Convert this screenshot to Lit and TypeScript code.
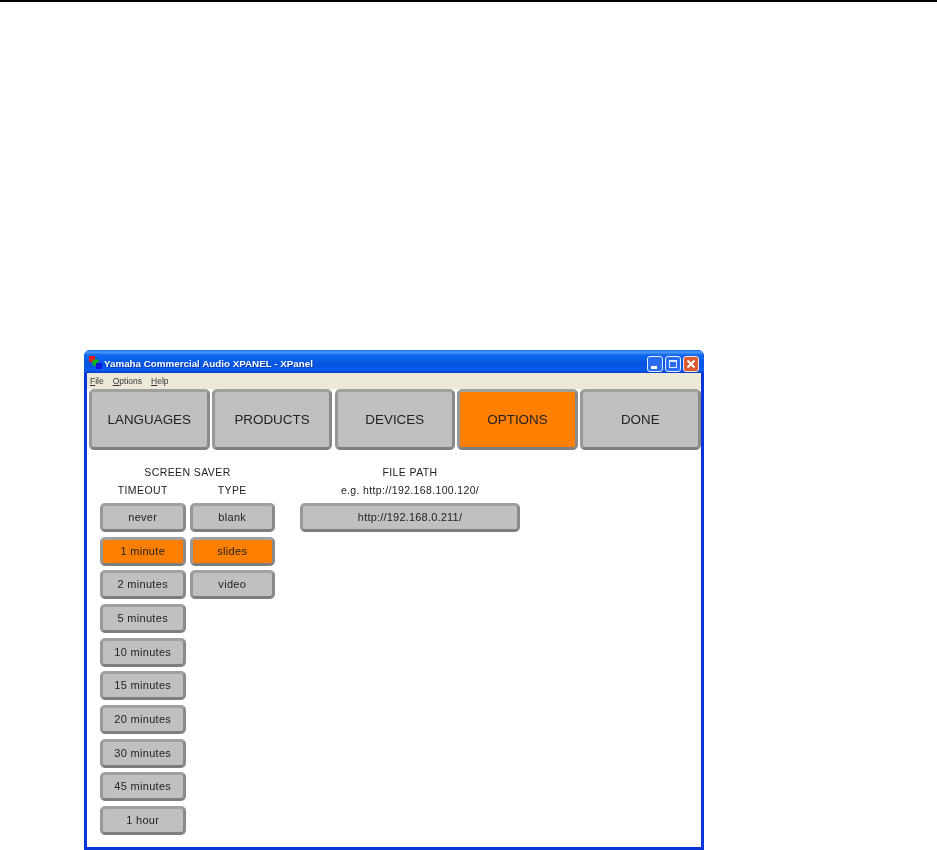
import { LitElement, html, css } from "lit";
import { customElement } from "lit/decorators.js";

const TABS = ["LANGUAGES", "PRODUCTS", "DEVICES", "OPTIONS", "DONE"];
const TIMEOUTS = ["never", "1 minute", "2 minutes", "5 minutes", "10 minutes", "15 minutes", "20 minutes", "30 minutes", "45 minutes", "1 hour"];
const TYPES = ["blank", "slides", "video"];

@customElement("app-root")
export class AppRoot extends LitElement {
  static styles = css`
    :host { display: block; width: 937px; height: 850px; overflow: hidden; background: #fff; font-family: "Liberation Sans", Arial, sans-serif; color: #222; }
    .rule { height: 2px; background: #000; }
    .page { padding: 348px 0 0 84px; }
    .window { width: 620px; height: 500px; box-sizing: border-box; display: flex; flex-direction: column; background: #0836d6; border-radius: 6px 6px 0 0; padding: 0 3px 3px; }
    .title { height: 23px; box-sizing: border-box; flex: none; margin: 0 -3px; padding: 4px 5px 0 5px; display: flex; align-items: center; gap: 2px; border-radius: 6px 6px 0 0;
      background: linear-gradient(#1a66ec 0, #4a9cfa 2px, #1268ee 5px, #0554e2 14px, #0a5cee 20px, #0240c8 23px); }
    .logo { flex: none; margin-top: -2px; }
    .caption { flex: 1; color: #fff; font: bold 9.8px "Liberation Sans", Arial, sans-serif; text-shadow: 1px 1px 0 #0a3aa8; white-space: nowrap; filter: blur(.2px); }
    .ctrls { display: flex; gap: 2px; }
    .ctrl { display: block; }
    .menu { height: 16px; box-sizing: border-box; padding: 0 0 1px 3px; flex: none; background: #ece9d8; display: flex; align-items: center; gap: 9px; font: 8.5px "Liberation Sans", Arial, sans-serif; color: #333; filter: blur(.25px); }
    .menu u { text-decoration-thickness: 1px; }
    .body { flex: 1; background: #fff; min-height: 0; }
    .tabs { display: flex; gap: 2.25px; padding: 0 0 0 2px; height: 61px; }
    .btn { box-sizing: border-box; display: flex; align-items: center; justify-content: center; background: #c0c0c0; border: 3px solid; border-color: #a0a0a0 #8a8a8a #7e7e7e #989898; border-radius: 5px; white-space: nowrap; filter: blur(.4px); }
    .btn.on { background: #ff8000; }
    .tab { width: 120.5px; font-size: 13.4px; }
    .content { display: flex; padding: 13px 0 0 13px; }
    .saver { width: 175px; margin-right: 25px; }
    .head { height: 18px; display: flex; align-items: center; justify-content: center; font-size: 10.5px; letter-spacing: .4px; white-space: nowrap; filter: blur(.25px); }
    .cols { display: flex; gap: 4px; }
    .col { width: 85.5px; display: flex; flex-direction: column; }
    .list { display: flex; flex-direction: column; gap: 4.67px; margin-top: 4px; }
    .sm { height: 29px; font-size: 11px; letter-spacing: .3px; padding-bottom: 1px; }
    .file { width: 220px; }
    .hint { letter-spacing: .35px; }
    .path { letter-spacing: .2px; }
  `;

  render() {
    return html`
      <div class="rule"></div>
      <div class="page">
        <div class="window">
          <div class="title">
            <svg class="logo" width="13" height="13" viewBox="0 0 13 13">
              <rect x="0" y="0" width="6" height="6" fill="#e81818"/>
              <rect x="3.5" y="3.5" width="6" height="6" fill="#14b414"/>
              <rect x="7" y="7" width="6" height="6" fill="#1414e0"/>
            </svg>
            <span class="caption">Yamaha Commercial Audio XPANEL - XPanel</span>
            <div class="ctrls">
              <svg class="ctrl" width="16" height="16" viewBox="0 0 16 16">
                <rect x=".5" y=".5" width="15" height="15" rx="2.5" fill="#2a6cf0" stroke="#e8eefc"/>
                <rect x="4" y="10" width="6" height="3" fill="#fff"/>
              </svg>
              <svg class="ctrl" width="16" height="16" viewBox="0 0 16 16">
                <rect x=".5" y=".5" width="15" height="15" rx="2.5" fill="#2a6cf0" stroke="#e8eefc"/>
                <rect x="4.5" y="4.5" width="7" height="7" fill="none" stroke="#dfe8fc"/>
                <rect x="4" y="4" width="8" height="2" fill="#dfe8fc"/>
              </svg>
              <svg class="ctrl" width="16" height="16" viewBox="0 0 16 16">
                <rect x=".5" y=".5" width="15" height="15" rx="2.5" fill="#dc5a32" stroke="#f2e4de"/>
                <path d="M4.5 4.5 L11.5 11.5 M11.5 4.5 L4.5 11.5" stroke="#fff" stroke-width="2"/>
              </svg>
            </div>
          </div>
          <div class="menu">
            <span><u>F</u>ile</span><span><u>O</u>ptions</span><span><u>H</u>elp</span>
          </div>
          <div class="body">
            <div class="tabs">
              ${TABS.map((t) => html`<div class="btn tab ${t === "OPTIONS" ? "on" : ""}">${t}</div>`)}
            </div>
            <div class="content">
              <div class="saver">
                <div class="head">SCREEN SAVER</div>
                <div class="cols">
                  <div class="col">
                    <div class="head">TIMEOUT</div>
                    <div class="list">
                      ${TIMEOUTS.map((t) => html`<div class="btn sm ${t === "1 minute" ? "on" : ""}">${t}</div>`)}
                    </div>
                  </div>
                  <div class="col">
                    <div class="head">TYPE</div>
                    <div class="list">
                      ${TYPES.map((t) => html`<div class="btn sm ${t === "slides" ? "on" : ""}">${t}</div>`)}
                    </div>
                  </div>
                </div>
              </div>
              <div class="file">
                <div class="head">FILE PATH</div>
                <div class="head hint">e.g. http://192.168.100.120/</div>
                <div class="list"><div class="btn sm path">http://192.168.0.211/</div></div>
              </div>
            </div>
          </div>
        </div>
      </div>
    `;
  }
}
